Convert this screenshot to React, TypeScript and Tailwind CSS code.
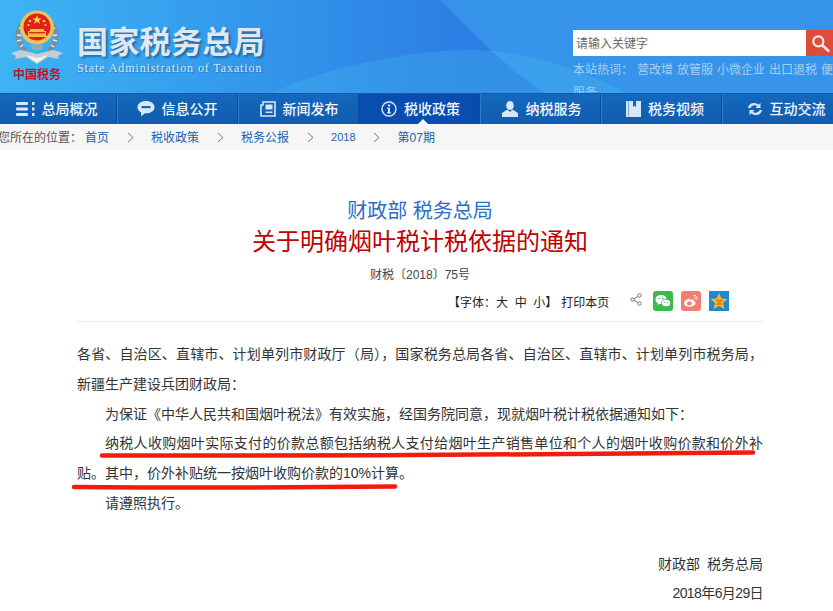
import React from "react";

const navItems = [
  { label: "总局概况", icon: "menu", shift: "pl-0" },
  { label: "信息公开", icon: "chat", shift: "pl-0" },
  { label: "新闻发布", icon: "news", shift: "pl-[2px]" },
  { label: "税收政策", icon: "info", shift: "pl-[3px]", active: true },
  { label: "纳税服务", icon: "user", shift: "pl-[2px]" },
  { label: "税务视频", icon: "book", shift: "pl-[8px]" },
  { label: "互动交流", icon: "sync", shift: "pl-[8px]" },
];

const crumbs = ["税收政策", "税务公报", "2018", "第07期"];
const hotWords = ["营改增", "放管服", "小微企业", "出口退税", "便"];

function NavIcon({ name }: { name: string }) {
  const fill = "#d7e8f8";
  if (name === "menu") {
    return (
      <svg width="20" height="16" viewBox="0 0 20 16">
        <rect x="1" y="1" width="12" height="3" rx="1" fill={fill} />
        <rect x="1" y="6.500" width="12" height="3" rx="1" fill={fill} />
        <rect x="1" y="12" width="12" height="3" rx="1" fill={fill} />
        <rect x="17" y="1" width="2.500" height="3" fill={fill} />
        <rect x="17" y="6.500" width="2.500" height="3" fill={fill} />
        <rect x="17" y="12" width="2.500" height="3" fill={fill} />
      </svg>
    );
  }
  if (name === "chat") {
    return (
      <svg width="18" height="16" viewBox="0 0 18 16">
        <path d="M9 0C4 0 .5 2.700.5 6.200c0 2.300 1.500 4.100 3.700 5.200L4 15.500l4-3.200h1c5 0 8.500-2.600 8.500-6.100S14 0 9 0z" fill={fill} />
        <rect x="4.500" y="5" width="9" height="2.200" fill="#1566b8" />
      </svg>
    );
  }
  if (name === "news") {
    return (
      <svg width="16" height="16" viewBox="0 0 16 16">
        <path d="M3 1h12v14H1V4h2z" fill="none" stroke={fill} strokeWidth="1.600" />
        <rect x="5.500" y="3.500" width="7" height="5" fill={fill} />
        <rect x="5.500" y="10.500" width="7" height="1.500" fill={fill} />
      </svg>
    );
  }
  if (name === "info") {
    return (
      <svg width="16" height="16" viewBox="0 0 16 16">
        <circle cx="8" cy="8" r="7" fill="none" stroke={fill} strokeWidth="1.400" />
        <rect x="7" y="3.500" width="2" height="2" fill={fill} />
        <path d="M6 6.800h3v4.400h1v1.200H6v-1.200h1V8H6z" fill={fill} />
      </svg>
    );
  }
  if (name === "user") {
    return (
      <svg width="18" height="16" viewBox="0 0 18 16">
        <ellipse cx="9" cy="4.500" rx="3.800" ry="4.500" fill={fill} />
        <path d="M6.500 8.500L1 12v4h16v-4l-5.500-3.500L9 11z" fill={fill} />
      </svg>
    );
  }
  if (name === "book") {
    return (
      <svg width="15" height="16" viewBox="0 0 15 16">
        <path d="M0 0h7v6l1.500-1.200L10 6V0h5v16H0z" fill={fill} />
        <rect x="2" y="0" width="1" height="16" fill="#7fa9d8" />
      </svg>
    );
  }
  return (
    <svg width="16" height="14" viewBox="0 0 16 14">
      <path d="M1 6c.5-3.200 3-5 6-5 2 0 3.500.7 4.500 1.800L13.500 1v5H8.500l1.700-1.700C9.500 3.600 8.400 3.200 7.300 3.200 5.500 3.200 4 4.300 3.500 6z" fill={fill} />
      <path d="M15 8c-.5 3.200-3 5-6 5-2 0-3.500-.7-4.500-1.800L2.500 13V8h5L5.800 9.700c.7.700 1.800 1.100 2.900 1.100 1.800 0 3.300-1.100 3.800-2.800z" fill={fill} />
    </svg>
  );
}

function Emblem() {
  return (
    <svg width="56" height="58" viewBox="0 0 56 58">
      <path d="M10 16C4 26 6 38 15 44l3-3C11 35 9 26 13 17z" fill="#7f8c98" />
      <path d="M46 16c6 10 4 22-5 28l-3-3c7-6 9-15 5-24z" fill="#7f8c98" />
      <path d="M10 20l3 1M8 27l4 .5M8 33l4-1M11 39l3-2M46 20l-3 1M48 27l-4 .5M48 33l-4-1M45 39l-3-2" stroke="#e8edf0" strokeWidth="1.500" />
      <circle cx="28" cy="19.500" r="17" fill="#e8c65a" />
      <circle cx="28" cy="19" r="13.500" fill="#e1201c" />
      <polygon points="28,7 29.200,10.400 32.800,10.400 29.900,12.500 31,15.900 28,13.800 25,15.900 26.100,12.500 23.200,10.400 26.800,10.400" fill="#f7d53c" />
      <circle cx="21" cy="13" r="1.300" fill="#f7d53c" />
      <circle cx="35" cy="13" r="1.300" fill="#f7d53c" />
      <circle cx="19.500" cy="17" r="1.100" fill="#f7d53c" />
      <circle cx="36.500" cy="17" r="1.100" fill="#f7d53c" />
      <path d="M21 21h14v2h2v4l1.500 2h-21L19 27v-4h2z" fill="#f0c040" />
      <rect x="20" y="24" width="16" height="1.500" fill="#d8332a" />
      <path d="M22 37h12l-1 5H23z" fill="#9aa6b0" />
      <path d="M2 45l10-3 16 4 16-4 10 3-5 3 1 3-11-2-11 7-11-7-11 2 1-3z" fill="#c5ced5" />
      <path d="M17 47l11 3 11-3-11 8z" fill="#f0f4f6" />
    </svg>
  );
}

function WeChat() {
  return (
    <svg width="20" height="20" viewBox="0 0 20 20">
      <rect width="20" height="20" rx="3" fill="#3fb94a" />
      <ellipse cx="8" cy="8.500" rx="5.500" ry="4.500" fill="#fff" />
      <path d="M5 11.500l-.5 2.500 3-1.500z" fill="#fff" />
      <ellipse cx="13" cy="12" rx="4.500" ry="3.600" fill="#fff" stroke="#3fb94a" strokeWidth=".7" />
      <circle cx="6.300" cy="7.500" r=".8" fill="#3fb94a" />
      <circle cx="9.700" cy="7.500" r=".8" fill="#3fb94a" />
      <circle cx="11.500" cy="11.500" r=".6" fill="#3fb94a" />
      <circle cx="14.500" cy="11.500" r=".6" fill="#3fb94a" />
    </svg>
  );
}

function Weibo() {
  return (
    <svg width="20" height="20" viewBox="0 0 20 20">
      <rect width="20" height="20" rx="3" fill="#f47c70" />
      <path d="M8.500 7.500c-3 .5-5.500 2.800-5.500 5 0 2 2.500 3.300 5.300 3.300 3.400 0 6.200-1.800 6.200-3.800 0-1.300-1.200-1.700-2-2 .4-1 .2-2-1.800-1.600-1 .3-1.800.8-2.200-.9z" fill="#fff" />
      <ellipse cx="8.300" cy="12.500" rx="2.500" ry="2" fill="#f47c70" />
      <path d="M12.500 4.500c2.500-.3 4.200 1.700 3.500 4M12.800 6.500c1.200-.2 1.800.8 1.500 1.800" fill="none" stroke="#fff" strokeWidth="1" />
    </svg>
  );
}

function QZone() {
  return (
    <svg width="20" height="20" viewBox="0 0 20 20">
      <rect width="20" height="20" fill="#1e88d8" />
      <polygon points="10,2 12.500,7.400 18.500,8 14,12 15.400,18 10,15 4.600,18 6,12 1.500,8 7.500,7.400" fill="#f8b91c" />
      <path d="M7 9.500h6l-4.500 3.500H13" fill="none" stroke="#e2701a" strokeWidth="1.300" />
    </svg>
  );
}

export default function App() {
  return (
    <div className="relative w-[833px] h-[611px] overflow-hidden bg-white font-['Liberation_Sans','Noto_Sans_CJK_SC',sans-serif]">
      {/* Header */}
      <header className="relative flex h-[93px] overflow-hidden bg-gradient-to-r from-[#3eb4f4] via-[#2c7fe4] via-55% to-[#2c7fe4]">
        <svg className="absolute left-0 top-0" width="833" height="93" viewBox="0 0 833 93">
          <path d="M440 0C470 30 510 72 545 93H833V0z" fill="#3695ea" />
          <path d="M270 93C340 62 420 50 470 50C530 50 580 70 628 93z" fill="#45b8f0" opacity=".3" />
        </svg>

        <div className="relative flex w-[573px] shrink-0">
          <div className="ml-[9px] mt-[8px] flex w-[56px] flex-col items-center">
            <Emblem />
            <span className="mt-[1px] whitespace-nowrap font-['Liberation_Serif','Noto_Sans_CJK_SC',serif] text-[12px] font-bold leading-[16px] text-[#c8101c]">
              中国税务
            </span>
          </div>
          <div className="ml-[12px] mt-[24px] flex flex-col">
            <span className="whitespace-nowrap text-[31px] font-bold leading-[38px] tracking-[0.3px] text-[#dfe8f0] [text-shadow:2px_2px_2px_rgba(30,70,120,0.6)]">
              国家税务总局
            </span>
            <span className="mt-[-1px] whitespace-nowrap font-['Liberation_Serif',serif] text-[12px] leading-[14px] tracking-[0.9px] text-[#dbe8f2] [text-shadow:1px_1px_1px_rgba(30,70,120,0.5)]">
              State Administration of Taxation
            </span>
          </div>
        </div>

        <div className="relative w-[260px] shrink-0 pt-[30px]">
          <div className="flex h-[26px]">
            <div className="flex w-[233px] items-center bg-white pl-[3px] pt-[1px] text-[12px] text-[#666]">请输入关键字</div>
            <div className="flex w-[27px] items-center justify-center bg-[#dd4b39]">
              <svg width="20" height="20" viewBox="0 0 18 18">
                <circle cx="7.500" cy="7.500" r="5.500" fill="#fbe9e6" />
                <circle cx="7.500" cy="7.500" r="3.500" fill="#dd4b39" />
                <path d="M11.500 11.500L16.500 16" stroke="#fbe9e6" strokeWidth="2.400" strokeLinecap="round" />
              </svg>
            </div>
          </div>
          <div className="mt-[4px] text-[12px] leading-[18px] text-[#a5d0f4]">
            <div className="flex whitespace-nowrap pt-[1px]">
              <span className="mr-[4px]">本站热词：</span>
              {hotWords.map((w) => (
                <span key={w} className="mr-[4px]">
                  {w}
                </span>
              ))}
            </div>
            <div className="mt-[5px]">服务</div>
          </div>
        </div>
      </header>

      {/* Nav */}
      <nav className="ml-[-4px] flex h-[31px] w-[860px] border-t border-[#0f5cab] bg-gradient-to-b from-[#1468bd] to-[#105cb0]">
        {navItems.map((item) => (
          <a
            key={item.label}
            className={`relative flex h-full w-[121px] shrink-0 items-center justify-center gap-[7px] border-r border-r-[#0b4c96] text-[14px] font-medium text-[#f2f7fc] shadow-[1px_0_0_#2d7cc8] ${item.shift} ${
              item.active ? "bg-[#0a4db0]" : ""
            }`}
          >
            <NavIcon name={item.icon} />
            <span className="whitespace-nowrap">{item.label}</span>
            {item.active && (
              <span className="absolute bottom-0 left-[59px] h-0 w-0 border-x-[5px] border-b-[5px] border-x-transparent border-b-white" />
            )}
          </a>
        ))}
      </nav>

      {/* Breadcrumb */}
      <div className="flex h-[26px] items-center bg-[#f6f6f6] pt-[1px] text-[12px] text-[#555]">
        <span className="ml-[-2px] w-[87px] shrink-0 whitespace-nowrap">您所在的位置：</span>
        <a className="text-[#1a5fb4]">首页</a>
        {crumbs.map((c) => (
          <React.Fragment key={c}>
            <svg className="mx-[17.500px]" width="7" height="11" viewBox="0 0 7 11">
              <path d="M1 1l5 4.500L1 10" fill="none" stroke="#5a7ea8" strokeWidth="1" />
            </svg>
            <a className={`whitespace-nowrap text-[#1a5fb4] ${c === "2018" ? "text-[11px]" : ""}`}>{c}</a>
          </React.Fragment>
        ))}
      </div>

      {/* Article */}
      <main className="relative ml-[77px] w-[686px]">
        <div className="pt-[47px] text-center">
          <div className="text-[20px] leading-[28px] text-[#2a6fc4]">财政部 税务总局</div>
          <h1 className="mt-[-1px] text-[24px] leading-[36px] text-[#c00000]">关于明确烟叶税计税依据的通知</h1>
          <div className="mt-[6px] text-[12px] leading-[18px] text-[#444]">财税〔2018〕75号</div>
        </div>

        <div className="flex h-[38px] items-start border-b border-[#eeeeee] pl-[371px] pt-[8px] text-[12px] text-[#222]">
          <span className="mt-[2px] whitespace-nowrap">【字体：大&nbsp;&nbsp;中&nbsp;&nbsp;小】</span>
          <span className="ml-[4px] mt-[2px] whitespace-nowrap">打印本页</span>
          <svg className="ml-[21px] mt-[1px]" width="12" height="13" viewBox="0 0 12 13">
            <path d="M9.500 2.500L3 6.500l6.500 4" fill="none" stroke="#777" strokeWidth="1" />
            <circle cx="9.500" cy="2.500" r="1.700" fill="#fff" stroke="#777" />
            <circle cx="2.500" cy="6.500" r="1.700" fill="#fff" stroke="#777" />
            <circle cx="9.500" cy="10.500" r="1.700" fill="#fff" stroke="#777" />
          </svg>
          <div className="ml-[11px] mt-[-1px] flex gap-[8px]">
            <WeChat />
            <Weibo />
            <QZone />
          </div>
        </div>

        <div className="mt-[18px] text-justify text-[14px] leading-[29.800px] text-[#333]">
          <p>各省、自治区、直辖市、计划单列市财政厅（局），国家税务总局各省、自治区、直辖市、计划单列市税务局，新疆生产建设兵团财政局：</p>
          <p className="indent-[28px]">为保证《中华人民共和国烟叶税法》有效实施，经国务院同意，现就烟叶税计税依据通知如下：</p>
          <p className="indent-[28px]">纳税人收购烟叶实际支付的价款总额包括纳税人支付给烟叶生产销售单位和个人的烟叶收购价款和价外补贴。其中，价外补贴统一按烟叶收购价款的10%计算。</p>
          <p className="indent-[28px]">请遵照执行。</p>
        </div>

        <div className="mt-[31px] text-right text-[14px] leading-[29px] text-[#333]">
          <div className="[word-spacing:3px]">财政部 税务总局</div>
          <div className="tracking-[-0.6px]">2018年6月29日</div>
        </div>
      </main>

      {/* Red marker lines drawn over the text */}
      <svg className="absolute left-0 top-0 pointer-events-none" width="833" height="611" viewBox="0 0 833 611">
        <path d="M102 455.500C300 456 600 455 753 452.500" fill="none" stroke="#f01c10" strokeWidth="4.500" strokeLinecap="round" />
        <path d="M74 487C200 488 300 487.500 395 486.500" fill="none" stroke="#f01c10" strokeWidth="4.500" strokeLinecap="round" />
      </svg>
    </div>
  );
}
